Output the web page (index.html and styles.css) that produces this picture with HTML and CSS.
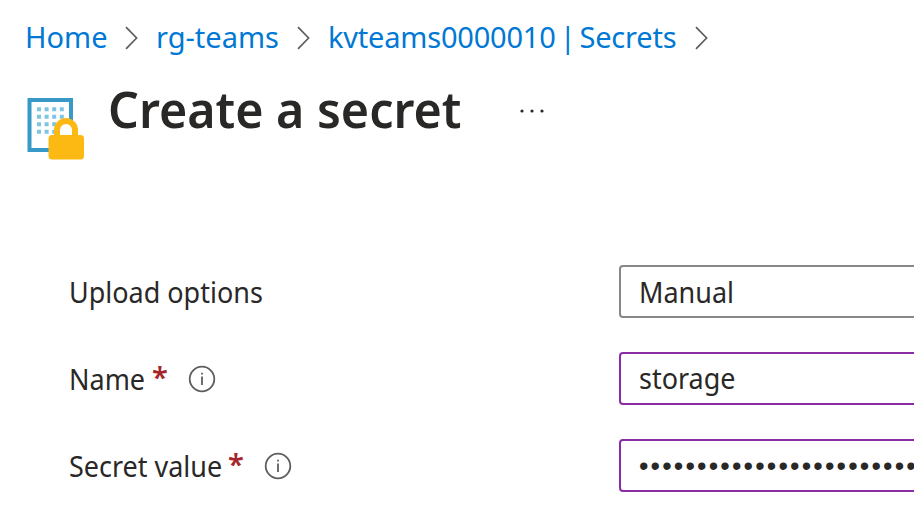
FILE: index.html
```html
<!DOCTYPE html>
<html lang="en">
<head>
<meta charset="utf-8">
<title>Create a secret</title>
<link rel="stylesheet" href="styles.css">
</head>
<body>
<nav class="crumbs">
  <a class="crumb crumb-home">Home</a>
  <svg class="chevron" viewBox="0 0 13 24"><path d="M1 1.2 11.6 12 1 22.8"/></svg>
  <a class="crumb crumb-group">rg-teams</a>
  <svg class="chevron" viewBox="0 0 13 24"><path d="M1 1.2 11.6 12 1 22.8"/></svg>
  <a class="crumb crumb-vault">kvteams0000010 | Secrets</a>
  <svg class="chevron" viewBox="0 0 13 24"><path d="M1 1.2 11.6 12 1 22.8"/></svg>
</nav>
<header class="title">
  <svg class="secret-icon" viewBox="0 0 58 63">
    <path d="M2.500 3H44V53H2.500Z" fill="#fff" stroke="#3999c6" stroke-width="4"/>
    <path d="M10 12.300H38M10 19.800H38M10 27.200H38M10 34.700H38" stroke="#7fc4e4" stroke-width="4" stroke-dasharray="4 3.600"/>
    <path d="M30 42V33a9 9 0 0 1 18 0v9" fill="#fff" stroke="#fdb913" stroke-width="6"/>
    <rect x="21.500" y="38" width="35.500" height="24.500" rx="3.500" fill="#fdb913"/>
  </svg>
  <h1>Create a secret</h1>
  <svg class="more" viewBox="0 0 26 6"><circle cx="3" cy="3" r="1.600"/><circle cx="13" cy="3" r="1.600"/><circle cx="23" cy="3" r="1.600"/></svg>
</header>
<main class="form">
  <div class="row">
    <div class="label"><span class="text">Upload options</span></div>
    <div class="field"><span class="text">Manual</span></div>
  </div>
  <div class="row">
    <div class="label"><span class="text name">Name</span><span class="required">*</span>
      <svg class="info" viewBox="0 0 28 28"><circle cx="14" cy="14" r="12.300"/><path d="M14 11.500V20"/><path d="M14 7.800V9.600"/></svg></div>
    <div class="field changed"><span class="text raised">storage</span></div>
  </div>
  <div class="row">
    <div class="label"><span class="text value">Secret value</span><span class="required">*</span>
      <svg class="info" viewBox="0 0 28 28"><circle cx="14" cy="14" r="12.300"/><path d="M14 11.500V20"/><path d="M14 7.800V9.600"/></svg></div>
    <div class="field changed"><span class="dots">••••••••••••••••••••••••</span></div>
  </div>
</main>
</body>
</html>
```
FILE: styles.css
```css
* { box-sizing: border-box; }
body {
  margin: 0;
  height: 511px;
  overflow: hidden;
  background: #fff;
  color: #292827;
  font-family: "Noto Sans", "Open Sans", sans-serif;
  font-size: 29px;
  line-height: 40px;
  white-space: nowrap;
}
.crumbs {
  display: flex;
  align-items: center;
  height: 76px;
  padding-left: 25px;
  color: #0078d4;
}
.crumb { flex: none; height: 40px; margin-top: -2px; }
.crumb-home { width: 100px; }
.crumb-group { width: 141px; }
.crumb-vault { width: 367px; letter-spacing: -0.2px; word-spacing: -3.3px; }
.chevron {
  flex: none;
  width: 13px;
  height: 24px;
  margin-right: 18px;
  fill: none;
  stroke: #605e5c;
  stroke-width: 1.7;
}
.title {
  display: flex;
  align-items: flex-start;
  height: 189px;
  padding-left: 27px;
}
.secret-icon { flex: none; width: 58px; height: 63px; margin-top: 21px; }
h1 {
  flex: none;
  width: 411px;
  margin: -2px 0 0 23px;
  font-size: 51px;
  font-weight: 600;
  line-height: 68px;
  transform: scaleX(0.949);
  transform-origin: left;
}
.more { width: 26px; height: 6px; margin-top: 32px; fill: #292827; }
.form { display: grid; gap: 34px; padding-left: 69px; }
.row { display: flex; height: 53px; }
.label { display: flex; align-items: center; width: 550px; padding-top: 1px; }
.text {
  display: block;
  transform: scaleX(0.93);
  transform-origin: left;
}
.name { width: 76px; }
.value { width: 152px; }
.raised { margin-top: -2px; }
.required { width: 16px; margin: -4px 0 0 7px; color: #a4262c; font-weight: 600; }
.info {
  width: 28px;
  height: 28px;
  margin: 0 0 0 20px;
  fill: none;
  stroke: #605e5c;
  stroke-width: 1.8;
}
.field {
  flex: none;
  display: flex;
  align-items: center;
  width: 330px;
  padding-left: 18px;
  border: 2px solid #8a8886;
  border-radius: 4px;
}
.changed { border-color: #8a2da5; }
.dots { font-family: "Liberation Sans", sans-serif; font-size: 27px; letter-spacing: 2.17px; }
```
